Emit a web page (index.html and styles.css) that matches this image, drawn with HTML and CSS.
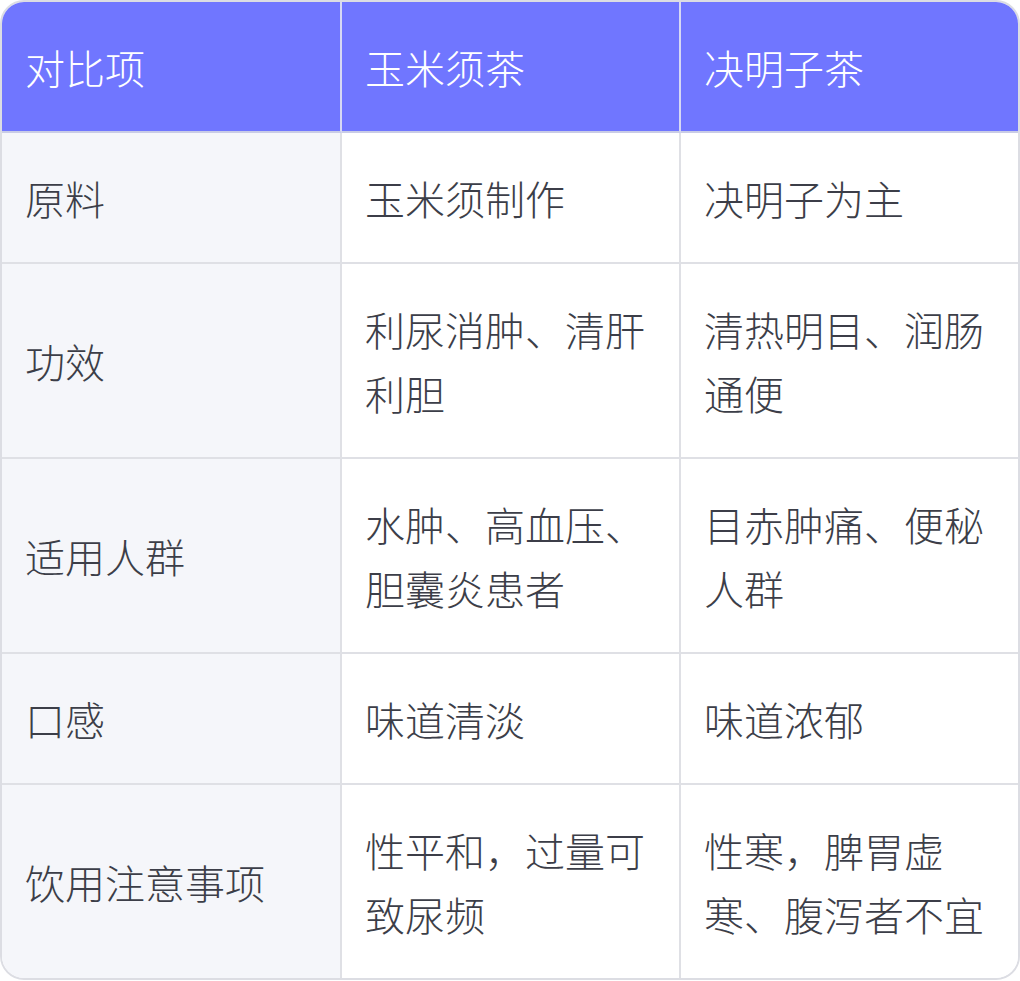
FILE: index.html
```html
<!DOCTYPE html>
<html lang="zh-CN">
<head>
<meta charset="utf-8">
<title>玉米须茶与决明子茶对比</title>
<link rel="stylesheet" href="styles.css">
</head>
<body>
<div class="table">
  <div class="cell head">对比项</div>
  <div class="cell head">玉米须茶</div>
  <div class="cell head last">决明子茶</div>

  <div class="cell key">原料</div>
  <div class="cell">玉米须制作</div>
  <div class="cell last">决明子为主</div>

  <div class="cell key">功效</div>
  <div class="cell">利尿消肿、清肝利胆</div>
  <div class="cell last">清热明目、润肠通便</div>

  <div class="cell key">适用人群</div>
  <div class="cell">水肿、高血压、胆囊炎患者</div>
  <div class="cell last">目赤肿痛、便秘人群</div>

  <div class="cell key">口感</div>
  <div class="cell">味道清淡</div>
  <div class="cell last">味道浓郁</div>

  <div class="cell key bottom">饮用注意事项</div>
  <div class="cell bottom">性平和，过量可致尿频</div>
  <div class="cell last bottom">性寒，脾胃虚寒、腹泻者不宜</div>
</div>
</body>
</html>
```

FILE: styles.css
```css
html, body {
  margin: 0;
  padding: 0;
  background: #ffffff;
}

.table {
  width: 1020px;
  box-sizing: border-box;
  border: 2px solid #dcdde3;
  border-radius: 24px;
  overflow: hidden;
  display: grid;
  grid-template-columns: 340px 339px 1fr;
  font-family: "Noto Sans CJK SC", "Noto Sans", sans-serif;
  font-size: 40px;
  font-weight: 300;
  line-height: 64px;
  color: #3c3e48;
}

.cell {
  box-sizing: border-box;
  padding: 33px 22px 32px 23px;
  border-right: 2px solid #dfe0e5;
  border-bottom: 2px solid #dfe0e5;
  background: #ffffff;
  display: flex;
  align-items: center;
}

.cell.last {
  border-right: none;
}

.cell.bottom {
  border-bottom: none;
}

.cell.head {
  background: #7076ff;
  color: #ffffff;
  border-right-color: #d6d8f4;
  border-bottom-color: #c9cce6;
}

.cell.key {
  background: #f5f6fa;
}
```
